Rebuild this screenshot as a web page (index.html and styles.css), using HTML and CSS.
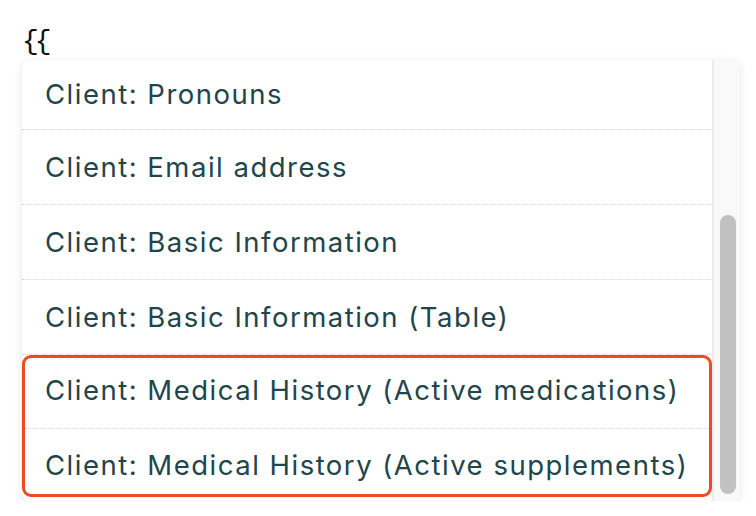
FILE: index.html
```html
<!DOCTYPE html>
<html>
<head>
<meta charset="utf-8">
<link rel="stylesheet" href="styles.css">
</head>
<body>
<div class="editor">
  <div class="braces">{{</div>
  <div class="panel">
    <div class="list">
      <div class="list-inner">
        <div class="row row-first">Client: Pronouns</div>
        <div class="row">Client: Email address</div>
        <div class="row">Client: Basic Information</div>
        <div class="row">Client: Basic Information (Table)</div>
        <div class="selected">
          <div class="row row-sel-first">Client: Medical History (Active medications)</div>
          <div class="row row-sel-last">Client: Medical History (Active supplements)</div>
        </div>
      </div>
    </div>
    <div class="track"><div class="thumb"></div></div>
  </div>
</div>
</body>
</html>
```
FILE: styles.css
```css
html, body {
  margin: 0;
  padding: 0;
  background: #ffffff;
}
.editor {
  padding: 24px 0 0 22px;
  width: 718px;
}
.braces {
  font-family: "Liberation Mono", monospace;
  font-size: 28px;
  line-height: 36px;
  height: 36px;
  letter-spacing: -4px;
  color: #111;
  padding-left: 0;
}
.panel {
  display: flex;
  height: 441px;
  background: #fff;
  border-radius: 7px;
  box-shadow: 0 2px 10px rgba(0, 0, 0, 0.09), 0 0 2px rgba(0, 0, 0, 0.05);
  overflow: hidden;
}
.list {
  flex: 1;
  overflow: hidden;
}
.list-inner {
  margin-top: -5px;
}
.row {
  height: 74px;
  display: flex;
  align-items: center;
  padding-left: 23px;
  border-bottom: 1px dotted #d4d4d4;
  font-family: Inter, "Noto Sans", sans-serif;
  font-size: 27.5px;
  letter-spacing: 1.5px;
  color: #21454b;
  box-sizing: content-box;
  white-space: nowrap;
}
.row-first {
  height: 70px;
  padding-top: 4px;
}
.selected {
  border: 3px solid #f04a25;
  border-radius: 9px;
  overflow: hidden;
}
.row-sel-first {
  height: 64px;
  padding-bottom: 6px;
  padding-left: 20px;
}
.row-sel-last {
  height: 58px;
  padding-top: 7px;
  padding-left: 20px;
  border-bottom: none;
}
.track {
  width: 26px;
  background: #f9f9f9;
  border-left: 2px solid #ececec;
  padding-top: 155px;
}
.thumb {
  width: 16px;
  height: 279px;
  margin-left: 6px;
  border-radius: 8px;
  background: #c1c1c1;
}
```
